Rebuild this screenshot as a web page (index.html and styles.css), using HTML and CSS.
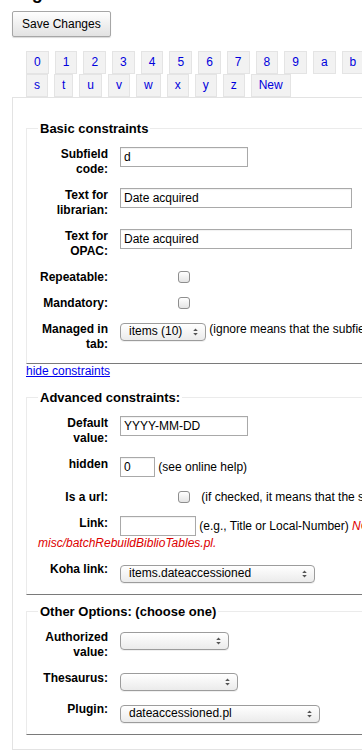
FILE: index.html
```html
<!DOCTYPE html>
<html lang="en">
  <head>
    <meta charset="UTF-8" />
    <meta name="viewport" content="width=device-width, initial-scale=1.0" />
    <title>Tag 952 Subfield constraints</title>
    <link rel="stylesheet" href="styles.css">
  </head>
  <body>
    <div class="page">
      <h1>Tag 952 Subfield constraints</h1>
      <button class="save" type="submit">Save Changes</button>

      <ul class="tabs">
        <li><a href="#sub0field">0</a></li>
        <li><a href="#sub1field">1</a></li>
        <li><a href="#sub2field">2</a></li>
        <li><a href="#sub3field">3</a></li>
        <li><a href="#sub4field">4</a></li>
        <li><a href="#sub5field">5</a></li>
        <li><a href="#sub6field">6</a></li>
        <li><a href="#sub7field">7</a></li>
        <li><a href="#sub8field">8</a></li>
        <li><a href="#sub9field">9</a></li>
        <li><a href="#subafield">a</a></li>
        <li><a href="#subbfield">b</a></li>
        <li><a href="#subcfield">c</a></li>
        <li><a href="#subdfield">d</a></li>
        <li><a href="#subefield">e</a></li>
        <li><a href="#subffield">f</a></li>
        <li><a href="#subgfield">g</a></li>
        <li><a href="#subhfield">h</a></li>
        <li><a href="#subifield">i</a></li>
        <li><a href="#subjfield">j</a></li>
        <li><a href="#subkfield">k</a></li>
        <li><a href="#sublfield">l</a></li>
        <li><a href="#submfield">m</a></li>
        <li><a href="#subnfield">n</a></li>
        <li><a href="#subofield">o</a></li>
        <li><a href="#subpfield">p</a></li>
        <li><a href="#subqfield">q</a></li>
        <li><a href="#subrfield">r</a></li>
        <li><a href="#subsfield">s</a></li>
        <li><a href="#subtfield">t</a></li>
        <li><a href="#subufield">u</a></li>
        <li><a href="#subvfield">v</a></li>
        <li><a href="#subwfield">w</a></li>
        <li><a href="#subxfield">x</a></li>
        <li><a href="#subyfield">y</a></li>
        <li><a href="#subzfield">z</a></li>
        <li><a href="#subfield-new">New</a></li>
      </ul>

      <div class="panel">
        <fieldset class="rows">
          <legend>Basic constraints</legend>
          <ol>
            <li>
              <label for="tagsubfield">Subfield code:</label>
              <input type="text" id="tagsubfield" class="in-short" value="d">
            </li>
            <li>
              <label for="liblibrarian">Text for librarian:</label>
              <input type="text" id="liblibrarian" class="in-long" value="Date acquired">
            </li>
            <li>
              <label for="libopac">Text for OPAC:</label>
              <input type="text" id="libopac" class="in-long" value="Date acquired">
            </li>
            <li>
              <label for="repeatable">Repeatable:</label>
              <input type="checkbox" id="repeatable">
            </li>
            <li>
              <label for="mandatory">Mandatory:</label>
              <input type="checkbox" id="mandatory">
            </li>
            <li>
              <label for="tab">Managed in tab:</label>
              <span class="select sel-tab">
                <select id="tab"><option>items (10)</option></select>
                <svg viewBox="0 0 5 8" width="5" height="8"><path d="M2.5 0.5 L4.8 3 H0.2 Z M0.2 5 H4.8 L2.5 7.5 Z"/></svg>
              </span>
              (ignore means that the subfield does not display in the record editor)
            </li>
          </ol>
        </fieldset>

        <div class="toggle"><a href="#">hide constraints</a></div>

        <fieldset class="rows advanced">
          <legend>Advanced constraints:</legend>
          <ol>
            <li>
              <label for="defaultvalue">Default value:</label>
              <input type="text" id="defaultvalue" class="in-short" value="YYYY-MM-DD">
            </li>
            <li class="row-hidden">
              <label for="hidden">hidden</label>
              <input type="text" id="hidden" class="in-tiny" value="0">
              (see online help)
            </li>
            <li>
              <label for="isurl">Is a url:</label>
              <input type="checkbox" id="isurl" class="check-text">
              (if checked, it means that the subfield is a URL and can be clicked)
            </li>
            <li>
              <label for="link">Link:</label>
              <input type="text" id="link" class="in-link" value="">
              (e.g., Title or Local-Number) <span class="note">NOTE: If you change this value you must ask your administrator to run<br>misc/batchRebuildBiblioTables.pl.</span>
            </li>
            <li>
              <label for="kohafield">Koha link:</label>
              <span class="select sel-link">
                <select id="kohafield"><option>items.dateaccessioned</option></select>
                <svg viewBox="0 0 5 8" width="5" height="8"><path d="M2.5 0.5 L4.8 3 H0.2 Z M0.2 5 H4.8 L2.5 7.5 Z"/></svg>
              </span>
            </li>
          </ol>
        </fieldset>

        <fieldset class="rows other">
          <legend>Other Options: (choose one)</legend>
          <ol>
            <li>
              <label for="authorised_value">Authorized value:</label>
              <span class="select sel-auth">
                <select id="authorised_value"><option></option></select>
                <svg viewBox="0 0 5 8" width="5" height="8"><path d="M2.5 0.5 L4.8 3 H0.2 Z M0.2 5 H4.8 L2.5 7.5 Z"/></svg>
              </span>
            </li>
            <li>
              <label for="authtypecode">Thesaurus:</label>
              <span class="select sel-thes">
                <select id="authtypecode"><option></option></select>
                <svg viewBox="0 0 5 8" width="5" height="8"><path d="M2.5 0.5 L4.8 3 H0.2 Z M0.2 5 H4.8 L2.5 7.5 Z"/></svg>
              </span>
            </li>
            <li>
              <label for="value_builder">Plugin:</label>
              <span class="select sel-plugin">
                <select id="value_builder"><option>dateaccessioned.pl</option></select>
                <svg viewBox="0 0 5 8" width="5" height="8"><path d="M2.5 0.5 L4.8 3 H0.2 Z M0.2 5 H4.8 L2.5 7.5 Z"/></svg>
              </span>
            </li>
          </ol>
        </fieldset>
      </div>
    </div>
  </body>
</html>
```

FILE: styles.css
```css
body {
  margin: 0;
  font-family: "Liberation Sans", Arial, sans-serif;
  font-size: 12px;
  line-height: 15px;
  color: #000;
  background: #fff;
  overflow: hidden;
}
.page {
  width: 900px;
  padding-left: 12px;
}
h1 {
  font-size: 18px;
  line-height: 22px;
  margin: -18px 0 7px;
}
.save {
  font: inherit;
  line-height: 15px;
  padding: 5px 9px 4px;
  color: #000;
  border: 1px solid #a6a6a6;
  border-radius: 2px;
  background: linear-gradient(180deg, #fefefe, #e2e2e2);
  box-shadow: 0 1px 1px rgba(0, 0, 0, 0.15);
}

/* tabs */
.tabs {
  display: flex;
  flex-wrap: wrap;
  column-gap: 6px;
  width: 800px;
  margin: 14px 0 0 14px;
  padding: 0;
  list-style: none;
}
.tabs a {
  display: block;
  padding: 3px 7px;
  border: 1px solid #e4e4e4;
  background: #f2f2f2;
  color: #0000dd;
  text-decoration: none;
}

/* panel */
.panel {
  border: 1px solid #e3e3e3;
  padding: 23px 13px 14px;
}
fieldset.rows {
  margin: 0;
  padding: 0 0 0 11px;
  border: 1px solid #ebebeb;
  border-bottom-color: #7a7a7a;
}
fieldset.rows legend {
  padding: 0 2px;
  font-size: 13px;
  font-weight: bold;
  line-height: 15px;
}
fieldset.advanced {
  margin-top: 11px;
}
fieldset.other {
  margin-top: 9px;
}
fieldset.rows ol {
  list-style: none;
  margin: 0;
  padding: 11px 0 0;
}
fieldset.rows li {
  display: flow-root;
  padding-bottom: 11px;
}
fieldset.rows li.row-hidden {
  padding-bottom: 13px;
}
fieldset.rows label {
  float: left;
  width: 70px;
  margin-right: 12px;
  text-align: right;
  font-weight: bold;
}

/* form controls */
input[type="text"] {
  box-sizing: border-box;
  height: 20px;
  margin: 0;
  padding: 1px 3px;
  font: inherit;
  border: 1px solid #a9a9a9;
  box-shadow: inset 0 1px 1px rgba(0, 0, 0, 0.06);
}
.in-short {
  width: 128px;
}
.in-long {
  width: 232px;
}
.in-tiny {
  width: 35px;
}
.in-link {
  width: 76px;
}
input[type="checkbox"] {
  appearance: none;
  width: 12px;
  height: 12px;
  margin: 0 0 0 58px;
  border: 1px solid #8e8e8e;
  border-radius: 3px;
  background: linear-gradient(180deg, #fff, #e4e4e4);
  vertical-align: -2px;
}
input.check-text {
  margin-right: 8px;
}
.select {
  position: relative;
  display: inline-block;
  height: 18px;
  vertical-align: -4px;
}
.sel-tab {
  vertical-align: -2px;
}
.select select {
  appearance: none;
  box-sizing: border-box;
  width: 100%;
  height: 18px;
  margin: 0;
  padding: 0 18px 0 8px;
  font: inherit;
  color: #000;
  border: 1px solid #9c9c9c;
  border-radius: 4px;
  background: linear-gradient(180deg, #fff, #ebebeb);
  box-shadow: 0 1px 0 rgba(0, 0, 0, 0.06);
}
.select svg {
  position: absolute;
  right: 8px;
  top: 5px;
  fill: #555;
}
.sel-tab {
  width: 86px;
}
.sel-link {
  width: 195px;
}
.sel-auth {
  width: 109px;
}
.sel-thes {
  width: 118px;
}
.sel-plugin {
  width: 200px;
}
.note {
  color: #dd0000;
  font-style: italic;
}
.toggle a {
  color: #0000ee;
}
```
